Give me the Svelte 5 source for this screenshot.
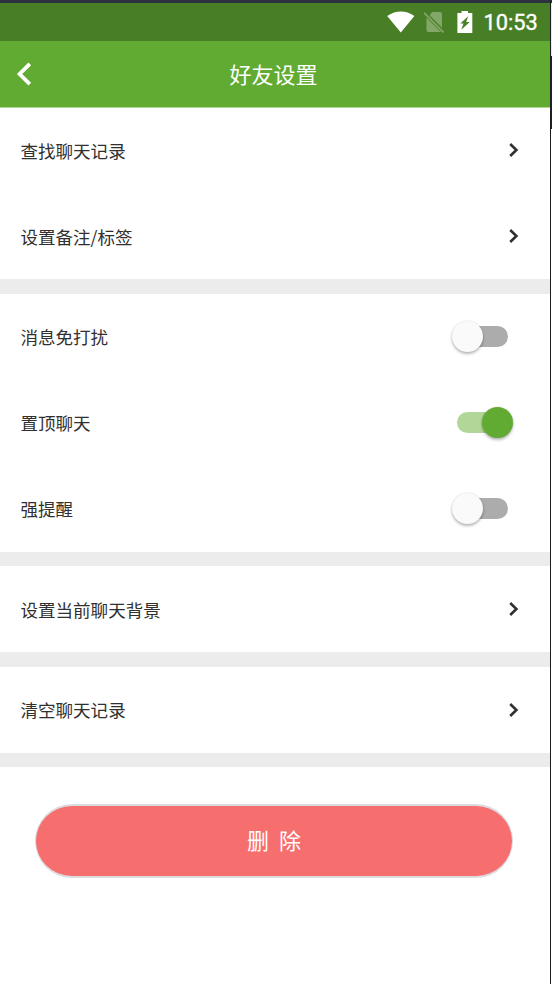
<script>
  const groups = [
    [{ label: '查找聊天记录' }, { label: '设置备注/标签' }],
    [
      { label: '消息免打扰', on: false },
      { label: '置顶聊天', on: true },
      { label: '强提醒', on: false }
    ],
    [{ label: '设置当前聊天背景' }],
    [{ label: '清空聊天记录' }]
  ];
</script>

<div class="window">
  <main class="screen">
    <div class="status">
      <svg class="wifi" width="28" height="22" viewBox="0 0 28 22"><path d="M.2 4.9Q13.8-4 27.400 4.900L13.800 21.500Z" fill="#fff" /></svg>
      <svg class="sim" width="22" height="23" viewBox="0 0 22 23">
        <path d="M9 1H17Q19 1 19 3V16.800L6.800 4.400ZM3.500 6.500L18 21H5.300Q3.500 21 3.500 19Z" fill="#83a768" />
        <path d="M1.200 1.800L20.500 21.400" stroke="#83a768" stroke-width="1.700" />
      </svg>
      <svg class="battery" width="16" height="22" viewBox="0 0 16 22">
        <path d="M4.500 0H11V2H15.300V22H.4V2H4.500Z" fill="#fff" />
        <path d="M11.200 5.200L3.300 12.600H6.500L4.300 18.800L12.700 10.900H9.200Z" fill="#487f26" />
      </svg>
      <span class="time">10:53</span>
    </div>
    <header>
      <svg class="back" width="18" height="26" viewBox="0 0 18 26"><path d="M14.800 2.800L4.600 13L14.800 23.200" fill="none" stroke="#fff" stroke-width="3.800" /></svg>
      <h1>好友设置</h1>
    </header>
    {#each groups as group}
      <section>
        {#each group as row}
          <div class="row">
            <span>{row.label}</span>
            {#if row.on === undefined}
              <svg class="chevron" width="12" height="16" viewBox="0 0 12 16"><path d="M2.200 2L8.400 8L2.200 14" fill="none" stroke="#303030" stroke-width="2.600" /></svg>
            {:else}
              <button class="switch" class:on={row.on} role="switch" aria-checked={row.on} aria-label={row.label}><i></i></button>
            {/if}
          </div>
        {/each}
      </section>
    {/each}
    <button class="delete">删&nbsp; 除</button>
  </main>
  <div class="frame"></div>
  <div class="outside"><i></i></div>
</div>

<style>
  :global(body) { margin: 0; background: #fff; }
  .window {
    display: flex;
    width: 552px;
    height: 984px;
    overflow: hidden;
    font-family: 'Noto Sans CJK SC', sans-serif;
  }
  .screen {
    display: flex;
    flex-direction: column;
    width: 550px;
    box-sizing: border-box;
    border-top: 3px solid #2b313f;
    background: #fff;
  }
  .frame { width: 1px; background: #1a1e24; }
  .outside { width: 1px; height: 984px; padding-top: 56px; box-sizing: border-box; background: linear-gradient(#2b313f 3px, #e8eaee 3px, #e8eaee 129px, #fff 129px); }
  .outside i { display: block; width: 1px; height: 73px; background: #032653; }
  .status {
    display: flex;
    align-items: center;
    justify-content: flex-end;
    flex: none;
    height: 38px;
    box-sizing: border-box;
    padding-right: 13px;
    background: #487f26;
    color: #fff;
  }
  .sim { margin-left: 8px; }
  .battery { margin-left: 12px; }
  .time { margin-left: 10.500px; padding-top: 2px; width: 53.500px; font: 400 21.800px/26px Roboto, sans-serif; -webkit-text-stroke: .35px #fff; white-space: nowrap; }
  header {
    position: relative;
    display: flex;
    align-items: center;
    justify-content: center;
    flex: none;
    height: 66px;
    border-bottom: 1px solid #b0d798;
    margin-bottom: -.5px;
    background: #61ab32;
    color: #fff;
  }
  .back { position: absolute; left: 15px; top: 20px; }
  h1 { margin: 0 3px 2px 0; font-size: 22px; font-weight: 400; line-height: 30px; }
  section { flex: none; }
  section::after { content: ''; display: block; height: 14.600px; background: #ececec; }
  .row {
    display: flex;
    align-items: center;
    justify-content: space-between;
    height: 85.900px;
    box-sizing: border-box;
    padding: 0 30px 0 20.500px;
    color: #303030;
    font-size: 17.550px;
    line-height: 26px;
  }
  .row span { padding-top: 1px; }
  .switch {
    display: flex;
    align-items: center;
    width: 51px;
    height: 21px;
    margin-right: 12px;
    padding: 0;
    border: 0;
    border-radius: 11px;
    background: #acacac;
  }
  .switch i {
    flex: none;
    width: 31px;
    height: 31px;
    margin-left: -4.700px;
    border-radius: 50%;
    background: #fafafa;
    box-shadow: 0 2px 3px #0004, 0 0 2px #0002;
  }
  .on { background: #b0d798; }
  .on i { margin-left: 24.700px; background: #61ab32; }
  .delete {
    flex: none;
    width: 478px;
    height: 74px;
    margin: 36.800px 0 0 35px;
    padding: 0 0 4px;
    border: 2px solid #dcdce0;
    border-width: 2px 1px;
    border-radius: 37px;
    background: #f66e6e;
    color: #fff;
    font: 400 22px/30px 'Noto Sans CJK SC', sans-serif;
  }
</style>
